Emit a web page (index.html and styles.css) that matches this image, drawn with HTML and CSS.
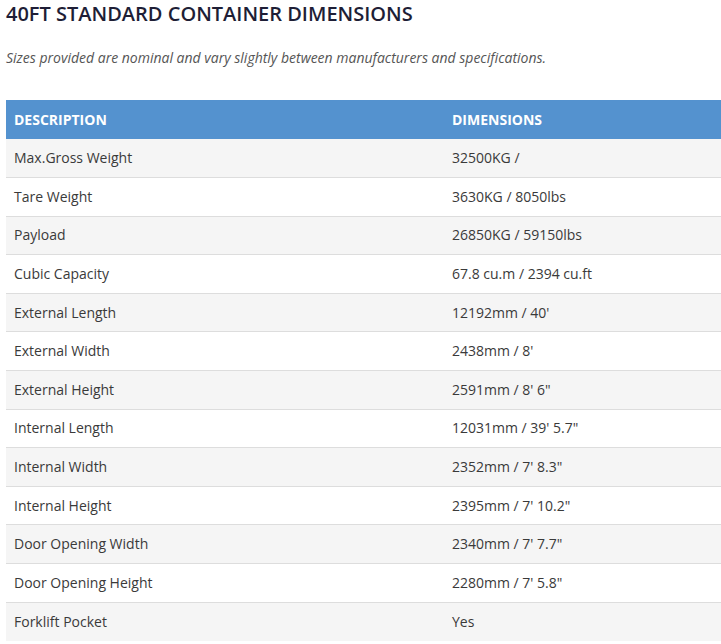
FILE: index.html
```html
<!DOCTYPE html>
<html>
<head>
<meta charset="utf-8">
<link rel="stylesheet" href="styles.css">
</head>
<body>
<div class="page">
  <h2 class="title">40FT STANDARD CONTAINER DIMENSIONS</h2>
  <p class="note">Sizes provided are nominal and vary slightly between manufacturers and specifications.</p>
  <table class="dims">
    <thead>
      <tr><th class="c1">DESCRIPTION</th><th>DIMENSIONS</th></tr>
    </thead>
    <tbody>
      <tr><td>Max.Gross Weight</td><td>32500KG /</td></tr>
      <tr><td>Tare Weight</td><td>3630KG / 8050lbs</td></tr>
      <tr><td>Payload</td><td>26850KG / 59150lbs</td></tr>
      <tr><td>Cubic Capacity</td><td>67.8 cu.m / 2394 cu.ft</td></tr>
      <tr><td>External Length</td><td>12192mm / 40'</td></tr>
      <tr><td>External Width</td><td>2438mm / 8'</td></tr>
      <tr><td>External Height</td><td>2591mm / 8' 6"</td></tr>
      <tr><td>Internal Length</td><td>12031mm / 39' 5.7"</td></tr>
      <tr><td>Internal Width</td><td>2352mm / 7' 8.3"</td></tr>
      <tr><td>Internal Height</td><td>2395mm / 7' 10.2"</td></tr>
      <tr><td>Door Opening Width</td><td>2340mm / 7' 7.7"</td></tr>
      <tr><td>Door Opening Height</td><td>2280mm / 7' 5.8"</td></tr>
      <tr><td>Forklift Pocket</td><td>Yes</td></tr>
    </tbody>
  </table>
</div>
</body>
</html>
```
FILE: styles.css
```css
html, body {
  margin: 0;
  padding: 0;
  background: #fff;
  overflow: hidden;
}
.page {
  padding: 0 0 0 6px;
  font-family: "Open Sans", "Liberation Sans", sans-serif;
  color: #3a3a3a;
}
.title {
  margin: 0;
  font-size: 20px;
  font-weight: 600;
  line-height: 27px;
  color: #1e1e36;
}
.note {
  margin: 21px 0 0;
  font-size: 14px;
  line-height: 20px;
  font-style: italic;
  color: #555;
}
.dims {
  margin-top: 32px;
  width: 715px;
  border-collapse: collapse;
  font-size: 14px;
}
.dims th {
  background: #5492cf;
  color: #fff;
  font-weight: 700;
  text-align: left;
  height: 39px;
  padding: 0 8px;
  box-sizing: border-box;
}
.dims th.c1 {
  width: 438px;
}
.dims td {
  height: 38.6px;
  padding: 0 8px;
  box-sizing: border-box;
  border-top: 1px solid #ddd;
  line-height: 20px;
}
.dims tbody tr:nth-child(odd) td {
  background: #f5f5f5;
}
.dims tbody tr:first-child td {
  border-top: none;
}
```
